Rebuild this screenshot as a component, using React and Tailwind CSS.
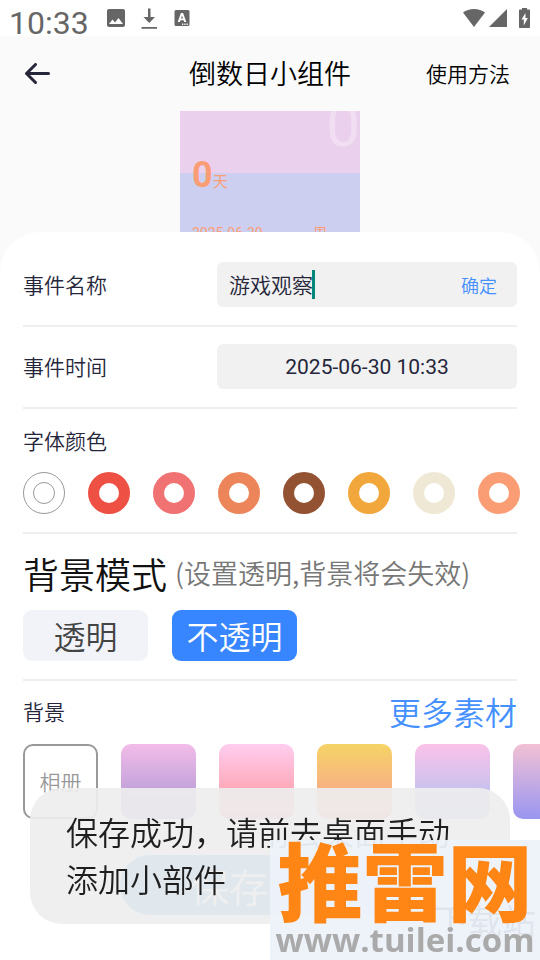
import { useState } from "react";
import { MdImage } from "react-icons/md";

const fontColors = [
  { name: "红色", className: "border-[11px] border-[#ee5144]" },
  { name: "粉红", className: "border-[11px] border-[#f07272]" },
  { name: "橙色", className: "border-[11px] border-[#ec865a]" },
  { name: "棕色", className: "border-[11px] border-[#935333]" },
  { name: "黄色", className: "border-[11px] border-[#f1a73b]" },
  { name: "米色", className: "border-[11px] border-[#efe8d5]" },
  { name: "浅橙", className: "border-[11px] border-[#fb9d74]" },
];

const backgrounds = [
  { name: "紫色", className: "from-[#f3bce8] to-[#a592d3]" },
  { name: "粉色", className: "from-[#ffcdef] to-[#fb9096]" },
  { name: "金色", className: "from-[#f5d365] to-[#f6998f]" },
  { name: "粉蓝", className: "from-[#fac2e9] to-[#a6c0f0]" },
  { name: "蓝紫", className: "from-[#f2c0d3] to-[#9a95f0]" },
];

function StatusBar() {
  return (
    <div className="flex h-9 items-center justify-between bg-white pl-[9px] pr-[10px] font-[Roboto,sans-serif] font-normal text-[#666]">
      <div className="flex items-center">
        <span className="pt-[10px] text-[32px] leading-9">10:33</span>
        <MdImage className="ml-[15px] size-6" />
        <svg className="ml-[9px] size-6" viewBox="0 0 24 24" fill="currentColor">
          <path d="M11 2.500h2.500V11H18l-5.750 6L6.500 11H11zM4.500 21h15.500v1.700H4.500z" />
        </svg>
        <svg className="ml-[9px] size-6" viewBox="0 0 24 24" fill="currentColor">
          <path
            fillRule="evenodd"
            d="M6 4h12a1.500 1.500 0 0 1 1.500 1.500v13a1.500 1.500 0 0 1-1.500 1.500H6a1.500 1.500 0 0 1-1.500-1.500v-13A1.500 1.500 0 0 1 6 4zm4.900 3L7.700 16h2.100l.6-1.800h3.200l.6 1.800h2.100L13.100 7zm.1 5.500l1-3 1 3zM12 17.600V19h1.300v-1.400zm2.300 0V19h1.300v-1.400zm2.300 0V19h1.300v-1.400z"
          />
        </svg>
      </div>
      <div className="flex items-center gap-1">
        <svg className="h-[18px] w-[22px]" viewBox="0 0 22 18" fill="currentColor">
          <path d="M0 3.500C3 1.200 6.800 0 11 0s8 1.200 11 3.500L11 18z" />
        </svg>
        <svg className="size-[18px]" viewBox="0 0 18 18" fill="currentColor">
          <path d="M18 0v18H0z" />
        </svg>
        <svg className="ml-2 h-5 w-[11px]" viewBox="0 0 11 20" fill="currentColor">
          <path
            fillRule="evenodd"
            d="M3 0h5v1.500h2c.6 0 1 .4 1 1V19c0 .6-.4 1-1 1H1c-.6 0-1-.4-1-1V2.500c0-.6.4-1 1-1h2zM6.500 5L2.500 11.500h2.300V17.500L8.800 10H6.500z"
          />
        </svg>
      </div>
    </div>
  );
}

function Header() {
  return (
    <header className="grid h-[75px] grid-cols-[1fr_auto_1fr] items-center px-6 text-black">
      <button type="button" aria-label="返回" className="justify-self-start">
        <svg
          className="h-[22px] w-[27px]"
          viewBox="0 0 27 22"
          fill="none"
          stroke="#25263a"
          strokeWidth="3"
          strokeLinecap="round"
          strokeLinejoin="round"
        >
          <path d="M24.500 10.500H2.500M11.500 1.500L2.500 10.500l9 9" />
        </svg>
      </button>
      <h1 className="text-[27px]">倒数日小组件</h1>
      <button type="button" className="justify-self-end pr-[6px] text-[21px]">
        使用方法
      </button>
    </header>
  );
}

function Preview() {
  return (
    <div className="mx-auto h-[121px] w-[180px] overflow-hidden bg-linear-to-b from-[#ebd0ee] from-[62px] to-[#cdcff1] to-[62px] font-[Roboto,'Noto_Sans_CJK_SC',sans-serif] font-normal text-[#fb9d74]">
      <div className="flex h-[37px] items-end justify-end text-[60px] leading-[44px] text-white/30">
        0
      </div>
      <div className="flex items-baseline px-3 pt-[7px]">
        <span className="text-4xl font-bold">0</span>
        <span className="text-[15px]">天</span>
      </div>
      <div className="flex justify-between pl-3 pr-[19px] pt-7 text-[14px] leading-5">
        <span>2025-06-30</span>
        <span>周一</span>
      </div>
    </div>
  );
}

function Toast() {
  return (
    <div
      role="status"
      className="fixed inset-x-[30px] bottom-9 rounded-[32px] bg-[#eee]/92 px-9 pb-[22px] pt-5 text-[32px] leading-[47px] text-[#1f1f1f]"
    >
      保存成功，请前去桌面手动添加小部件
    </div>
  );
}

function Watermark() {
  return (
    <div className="fixed bottom-0 right-0 h-[120px] w-[270px] overflow-hidden bg-[#edf2fa]/95 text-center">
      <div className="absolute bottom-4 right-1 text-[34px] font-normal leading-[48px] text-[#e0e5ed]">
        下载站
      </div>
      <div className="relative text-[85px] font-black leading-[76px] text-[#ff8614]">推雷网</div>
      <div className="relative font-['Open_Sans',sans-serif] text-[33px] font-bold leading-[48px] text-[#aaa]">
        www.tuilei.com
      </div>
    </div>
  );
}

export default function App() {
  const [eventName, setEventName] = useState("游戏观察");
  const [transparent, setTransparent] = useState(false);

  const modeClass = "h-[51px] w-[125px] rounded-[9px] text-[32px] leading-[51px]";

  return (
    <div className="flex min-h-screen flex-col bg-[#fafafa] font-['Noto_Sans_CJK_SC',sans-serif] font-[350] text-[#25263a]">
      <StatusBar />
      <Header />
      <Preview />

      <main className="flex-1 rounded-t-[40px] bg-white px-[23px] pt-[30px] text-[21px]">
        <div className="flex items-center border-b-2 border-[#efefef] pb-[18px]">
          <label htmlFor="event-name" className="flex-1">
            事件名称
          </label>
          <div className="flex h-[45px] w-[300px] items-center rounded-md bg-[#f1f1f1] pl-3 pr-5">
            <input
              id="event-name"
              value={eventName}
              onChange={(e) => setEventName(e.target.value)}
              className="field-sizing-content outline-none"
            />
            <span className="-ml-px h-[29px] w-[3px] bg-[#00897b]" />
            <button type="button" className="ml-auto text-lg text-[#4590ff]">
              确定
            </button>
          </div>
        </div>

        <div className="flex items-center border-b-2 border-[#efefef] pb-[18px] pt-[17px]">
          <label htmlFor="event-time" className="flex-1">
            事件时间
          </label>
          <input
            id="event-time"
            readOnly
            value="2025-06-30 10:33"
            className="h-[45px] w-[300px] rounded-md bg-[#f1f1f1] text-center font-[Roboto,sans-serif] font-normal outline-none"
          />
        </div>

        <fieldset className="border-b-2 border-[#efefef] pb-[18px] pt-[15px]">
          <legend className="float-left w-full leading-8">字体颜色</legend>
          <div className="clear-both -mr-[23px] flex gap-[23px] overflow-hidden pt-4">
            <input
              type="radio"
              name="font-color"
              aria-label="默认"
              className="grid size-[42px] shrink-0 appearance-none place-items-center rounded-full border border-[#999] before:size-[22px] before:rounded-full before:border before:border-[#999]"
            />
            {fontColors.map((color) => (
              <input
                key={color.name}
                type="radio"
                name="font-color"
                aria-label={color.name}
                className={`size-[42px] shrink-0 appearance-none rounded-full ${color.className}`}
              />
            ))}
          </div>
        </fieldset>

        <section className="border-b-2 border-[#efefef] pb-[18px] pt-3">
          <div className="flex items-center gap-2">
            <h2 className="text-4xl leading-[54px] text-[#111]">背景模式</h2>
            <span className="text-[27px] leading-[54px] text-[#777]">(设置透明,背景将会失效)</span>
          </div>
          <div className="mt-[10px] flex gap-6">
            <button
              type="button"
              onClick={() => setTransparent(true)}
              className={`${modeClass} ${transparent ? "bg-[#3785ff] text-white" : "bg-[#f1f3f8] text-[#444]"}`}
            >
              透明
            </button>
            <button
              type="button"
              onClick={() => setTransparent(false)}
              className={`${modeClass} ${transparent ? "bg-[#f1f3f8] text-[#444]" : "bg-[#3785ff] text-white"}`}
            >
              不透明
            </button>
          </div>
        </section>

        <section className="pt-[6px]">
          <div className="flex items-center justify-between leading-[48px]">
            <h2>背景</h2>
            <a href="#more" className="text-[32px] leading-[48px] text-[#4590ff]">
              更多素材
            </a>
          </div>
          <div className="-mr-[23px] mt-[9px] flex gap-[23px] overflow-hidden">
            <button
              type="button"
              className="size-[75px] shrink-0 rounded-[10px] border-2 border-[#999] text-[#999]"
            >
              相册
            </button>
            {backgrounds.map((bg) => (
              <button
                key={bg.name}
                type="button"
                aria-label={bg.name}
                className={`size-[75px] shrink-0 rounded-[10px] bg-linear-to-b ${bg.className}`}
              />
            ))}
          </div>
        </section>

        <div className="px-[97px] pb-[45px] pt-9">
          <button
            type="button"
            className="h-[60px] w-full rounded-full bg-[#3fa0f0] pl-[70px] text-left text-[39px] leading-[60px] text-white"
          >
            保存
          </button>
        </div>
      </main>

      <Toast />
      <Watermark />
    </div>
  );
}
